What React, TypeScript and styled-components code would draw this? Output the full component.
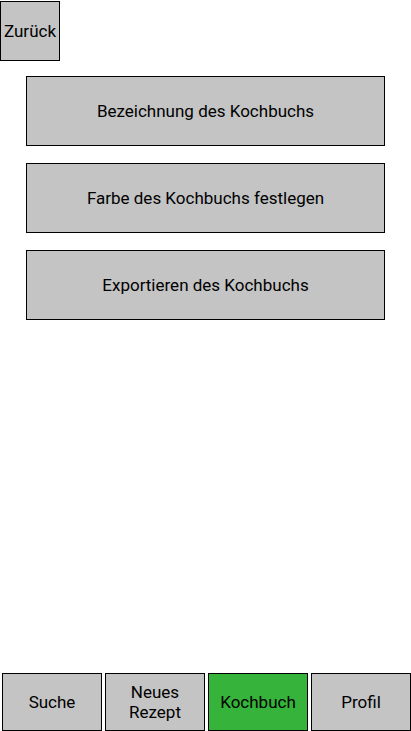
import styled, { createGlobalStyle } from "styled-components";

const GlobalStyle = createGlobalStyle`
  html, body {
    margin: 0;
    padding: 0;
    background: #ffffff;
  }
  body {
    font-family: Roboto, "Liberation Sans", sans-serif;
  }
`;

const menuItems = [
  "Bezeichnung des Kochbuchs",
  "Farbe des Kochbuchs festlegen",
  "Exportieren des Kochbuchs",
];

const navItems = [
  { label: "Suche" },
  { label: "Neues\nRezept" },
  { label: "Kochbuch", active: true },
  { label: "Profil" },
];

export default function App() {
  return (
    <>
      <GlobalStyle />
      <Page>
        <BackButton>Zurück</BackButton>
        <MenuList>
          {menuItems.map((item) => (
            <MenuButton key={item}>{item}</MenuButton>
          ))}
        </MenuList>
        <BottomNav>
          {navItems.map((item) => (
            <NavButton key={item.label} active={item.active}>
              {item.label}
            </NavButton>
          ))}
        </BottomNav>
      </Page>
    </>
  );
}

const Page = styled.div`
  display: flex;
  flex-direction: column;
  width: 411px;
  height: 731px;
  box-sizing: border-box;
  padding-top: 1px;
`;

const BackButton = styled.button`
  width: 60px;
  height: 60px;
  margin: 0;
  padding: 0;
  background-color: #c4c4c4;
  border: 1px solid #000000;
  box-sizing: border-box;
  font-family: Roboto, "Liberation Sans", sans-serif;
  font-size: 17px;
  color: #000000;
  cursor: pointer;
`;

const MenuList = styled.div`
  display: flex;
  flex-direction: column;
  gap: 17px;
  padding: 15px 26px 0 26px;
  flex: 1;
`;

const MenuButton = styled.button`
  width: 359px;
  height: 70px;
  margin: 0;
  padding: 0;
  background-color: #c4c4c4;
  border: 1px solid #000000;
  box-sizing: border-box;
  font-family: Roboto, "Liberation Sans", sans-serif;
  font-size: 17px;
  color: #000000;
  cursor: pointer;
`;

const BottomNav = styled.nav`
  display: flex;
  gap: 3px;
  padding-left: 2px;
`;

const NavButton = styled.button<{ active?: boolean }>`
  width: 100px;
  height: 58px;
  margin: 0;
  padding: 0;
  background-color: ${(props) => (props.active ? "#35b33a" : "#c4c4c4")};
  border: 1px solid #000000;
  box-sizing: border-box;
  font-family: Roboto, "Liberation Sans", sans-serif;
  font-size: 17px;
  line-height: 20px;
  color: #000000;
  white-space: pre-line;
  cursor: pointer;
`;
